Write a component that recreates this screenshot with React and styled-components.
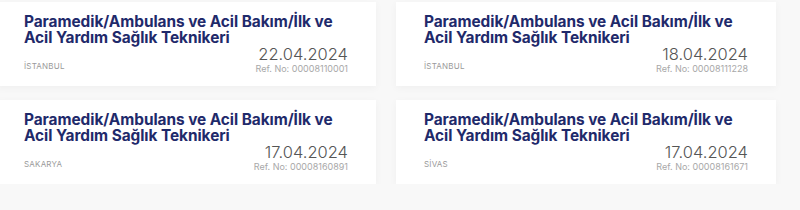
import React from "react";
import styled, { createGlobalStyle } from "styled-components";

const GlobalStyle = createGlobalStyle`
  html, body {
    margin: 0;
    padding: 0;
    background: #f8f8f8;
    font-family: Inter, "Noto Sans", Arial, sans-serif;
    overflow: hidden;
  }
`;

const jobs = [
  { id: 1, title: "Paramedik/Ambulans ve Acil Bakım/İlk ve Acil Yardım Sağlık Teknikeri", city: "İstanbul", date: "22.04.2024", ref: "00008110001" },
  { id: 2, title: "Paramedik/Ambulans ve Acil Bakım/İlk ve Acil Yardım Sağlık Teknikeri", city: "İstanbul", date: "18.04.2024", ref: "00008111228" },
  { id: 3, title: "Paramedik/Ambulans ve Acil Bakım/İlk ve Acil Yardım Sağlık Teknikeri", city: "Sakarya", date: "17.04.2024", ref: "00008160891" },
  { id: 4, title: "Paramedik/Ambulans ve Acil Bakım/İlk ve Acil Yardım Sağlık Teknikeri", city: "Sivas", date: "17.04.2024", ref: "00008161671" },
];

let Grid = styled.div`
  display: grid;
  grid-template-columns: 380px 380px;
  column-gap: 20px;
  row-gap: 14px;
  padding-top: 2px;
  margin-left: -4px;
`;
let Card = styled.div`
  background: #fff;
  height: 84px;
  box-sizing: border-box;
  padding: 12px 28px 0 28px;
  box-shadow: 0 2px 8px rgba(0, 0, 0, 0.04);
`;
let Title = styled.h3`
  margin: 0;
  font-size: 15.4px;
  line-height: 16px;
  font-weight: 700;
  color: #1f2a6b;
  letter-spacing: -0.05px;
`;
let Bottom = styled.div`
  display: flex;
  justify-content: space-between;
  align-items: flex-end;
`;
let City = styled.span`
  font-size: 8px;
  line-height: 10px;
  text-transform: uppercase;
  color: #9a9a9a;
  margin-bottom: 3px;
  letter-spacing: 0.2px;
`;
let Meta = styled.div`
  display: flex;
  flex-direction: column;
  align-items: flex-end;
`;
let DateText = styled.span`
  font-size: 16.5px;
  font-weight: 300;
  color: #555;
  line-height: 17px;
`;
let Ref = styled.span`
  font-size: 9px;
  line-height: 10px;
  color: #a8a8a8;
  margin-top: 1px;
`;

const App = () => {
  return (
    <>
      <GlobalStyle />
      <Grid>
        {jobs.map((job) => (
          <Card key={job.id}>
            <Title>{job.title}</Title>
            <Bottom>
              <City>{job.city.toLocaleUpperCase("tr-TR")}</City>
              <Meta>
                <DateText>{job.date}</DateText>
                <Ref>Ref. No: {job.ref}</Ref>
              </Meta>
            </Bottom>
          </Card>
        ))}
      </Grid>
    </>
  );
};

export default App;
